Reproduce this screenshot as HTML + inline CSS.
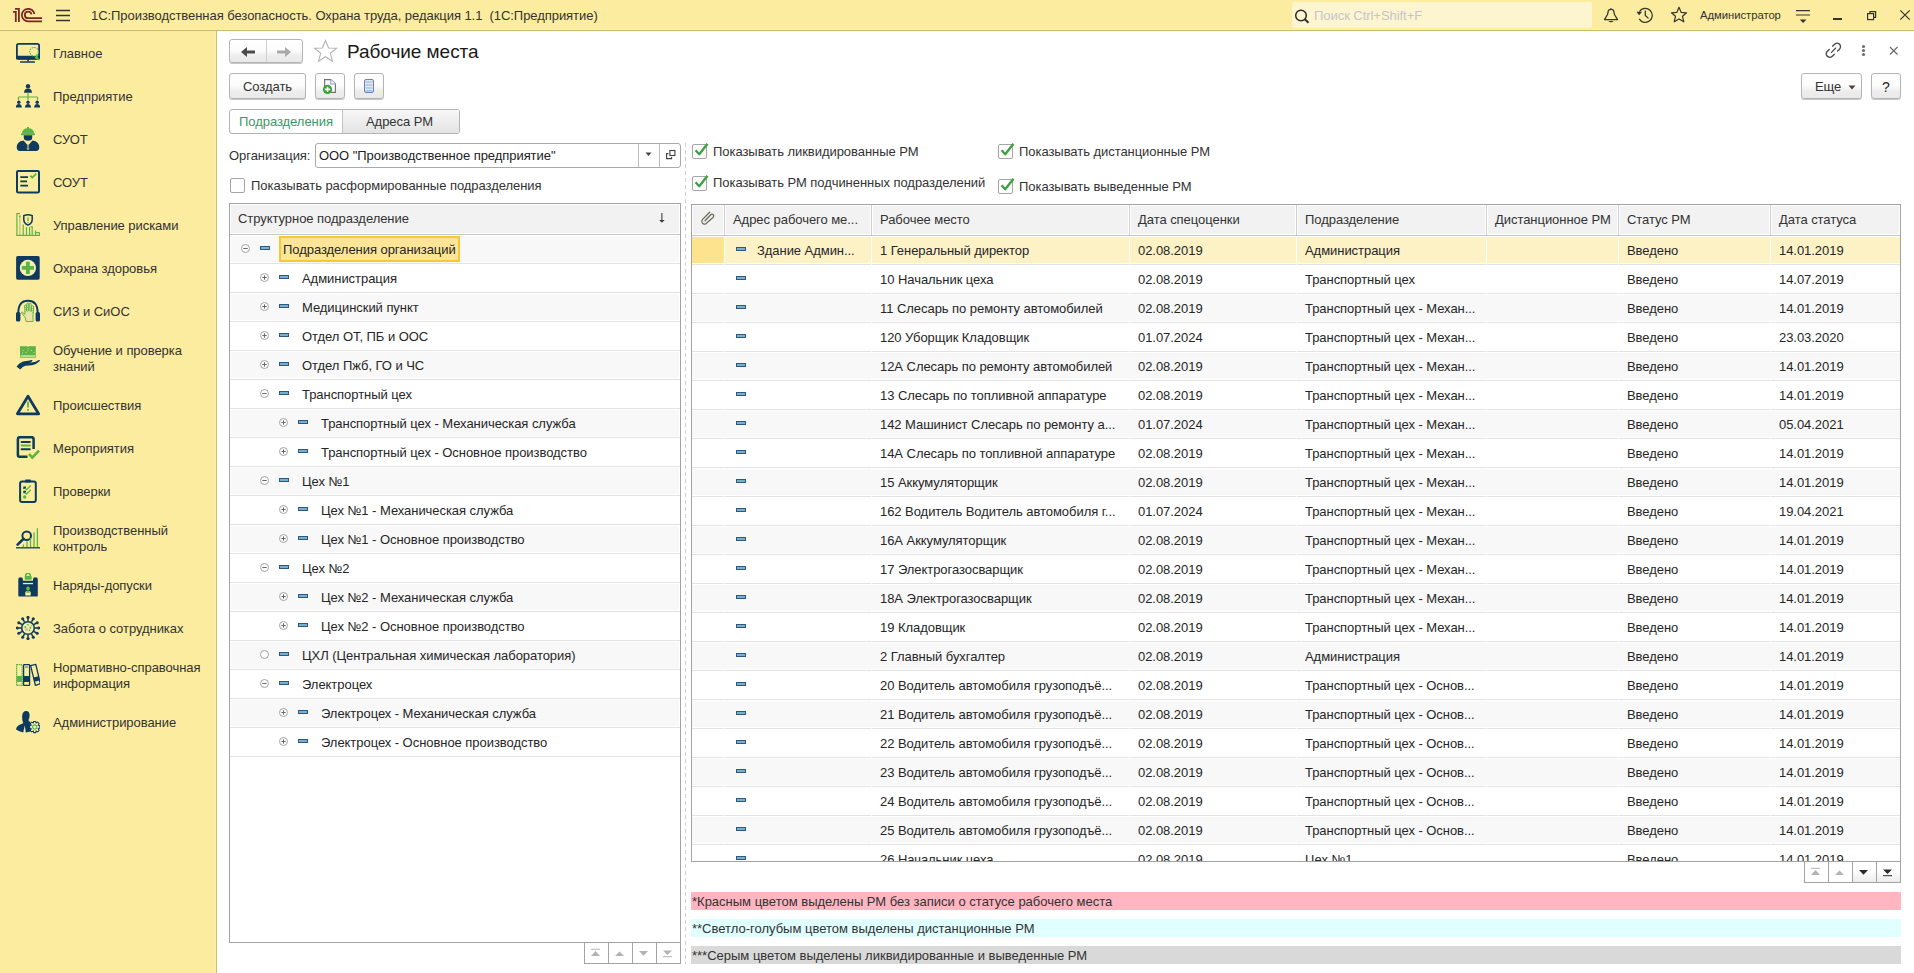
<!DOCTYPE html><html><head><meta charset="utf-8"><style>
html,body{margin:0;padding:0;}
body{width:1914px;height:973px;overflow:hidden;position:relative;background:#fff;font-family:"Liberation Sans",sans-serif;color:#333;}
.a{position:absolute;box-sizing:border-box;}
.t{position:absolute;white-space:pre;letter-spacing:-0.05px;}
.btn{position:absolute;box-sizing:border-box;border:1px solid #b4b4b4;border-radius:3px;background:linear-gradient(#ffffff 0%,#fcfcfc 48%,#ededed 72%,#e9e9e9 100%);box-shadow:0 1px 0 #c8c8c8;}
</style></head><body>
<div class="a" style="left:0px;top:0px;width:1914px;height:30px;background:#fbec9f;"></div>
<div class="a" style="left:0px;top:29px;width:1914px;height:1px;background:#fdf0a6;"></div>
<div class="a" style="left:0px;top:30px;width:1914px;height:1px;background:#cbbb6c;"></div>
<div class="a" style="left:0px;top:31px;width:216px;height:942px;background:#fbec9f;"></div>
<div class="a" style="left:215px;top:31px;width:1px;height:942px;background:#fcefa4;"></div>
<div class="a" style="left:216px;top:31px;width:1px;height:942px;background:#cdbf72;"></div>
<svg class="a" style="left:0px;top:0px;" width="50" height="30" viewBox="0 0 50 30"><g fill="none" stroke="#7d2424" stroke-width="1.75">
<path d="M13 11.8 H15.8 V22"/>
<path d="M15 8.9 H18.9 V22"/>
<path d="M34.4 14 A6.3 6.3 0 1 0 28.2 21.4 H42"/>
<path d="M31.4 14.4 A3.3 3.3 0 1 0 28.2 18.2 H42"/>
</g></svg>
<svg class="a" style="left:55px;top:9px;" width="16" height="13" viewBox="0 0 16 13"><g stroke="#333" stroke-width="1.3"><path d="M1 1.5H15M1 6.5H15M1 11.5H15"/></g></svg>
<div class="t " style="left:91px;top:6px;font-size:13px;line-height:20px;color:#333333;">1С:Производственная безопасность. Охрана труда, редакция 1.1  (1С:Предприятие)</div>
<div class="a" style="left:1292px;top:2px;width:300px;height:26px;background:#fdf5cf;border-radius:2px;"></div>
<svg class="a" style="left:1294px;top:9px;" width="17" height="15" viewBox="0 0 17 15"><g fill="none" stroke="#2b2b2b" stroke-width="1.5"><circle cx="7" cy="6.5" r="5.3"/><path d="M10.8 10.3 L14.5 13.8" stroke-width="2"/></g></svg>
<div class="t " style="left:1314px;top:6px;font-size:13px;line-height:20px;color:#c3c5cc;">Поиск Ctrl+Shift+F</div>
<svg class="a" style="left:1600px;top:0px;" width="22" height="30" viewBox="0 0 22 30"><g fill="none" stroke="#333" stroke-width="1.25"><path d="M11 8.3 V9.5"/><path d="M8.5 10.2 Q11 8.5 13.5 10.2 L14.5 14.5 L17.5 19.6 H4.5 L7.5 14.5 Z" stroke-linejoin="round"/></g><path d="M8.3 21 H13.7 Q11 23.6 8.3 21Z" fill="#333"/></svg>
<svg class="a" style="left:1634px;top:0px;" width="22" height="30" viewBox="0 0 22 30"><g fill="none" stroke="#333" stroke-width="1.25"><path d="M5.43 11.59 A7 7 0 1 1 5.24 18.9"/><path d="M11.3 10.5 V15.4 L14.5 18.4"/></g><path d="M2.4 11.8 L8 11.8 L5.2 15.2Z" fill="#333"/></svg>
<svg class="a" style="left:1670px;top:6px;" width="18" height="18" viewBox="0 0 18 18"><path fill="none" stroke="#333" stroke-width="1.2" stroke-linejoin="round" d="M9 1.3 L11.2 6.4 L16.6 6.8 L12.5 10.3 L13.8 15.8 L9 12.9 L4.2 15.8 L5.5 10.3 L1.4 6.8 L6.8 6.4 Z"/></svg>
<div class="t " style="left:1700px;top:5px;font-size:11.3px;line-height:20px;color:#333333;">Администратор</div>
<svg class="a" style="left:1794px;top:0px;" width="18" height="30" viewBox="0 0 18 30"><g stroke="#333" stroke-width="1.2"><path d="M2 10.6H16M2 15H16"/></g><path d="M5.8 19.6 L12.4 19.6 L9.1 22.9 Z" fill="#333"/></svg>
<div class="a" style="left:1833px;top:18px;width:9px;height:2px;background:#333;"></div>
<svg class="a" style="left:1865px;top:9px;" width="14" height="14" viewBox="0 0 14 14"><g fill="none" stroke="#333" stroke-width="1.2"><rect x="2.6" y="4.6" width="6" height="6"/><path d="M5 4.6 V2.6 H10.6 V8.4 H8.6"/></g></svg>
<svg class="a" style="left:1898px;top:8px;" width="14" height="14" viewBox="0 0 14 14"><g stroke="#333" stroke-width="1.2"><path d="M2.3 2.3 L11.7 11.7 M11.7 2.3 L2.3 11.7"/></g></svg>
<div class="t " style="left:53px;top:44px;font-size:13px;line-height:20px;color:#333333;">Главное</div>
<svg class="a" style="left:16px;top:41px;" width="24" height="24" viewBox="0 0 24 24"><rect x="0.9" y="2.9" width="22.2" height="15" rx="1.8" fill="none" stroke="#0f3a5f" stroke-width="1.8"/><rect x="0" y="14.8" width="24" height="3.6" rx="1" fill="#0f3a5f"/><rect x="11.3" y="18" width="1.6" height="2.5" fill="#0f3a5f"/><rect x="4" y="20.2" width="15" height="1.6" rx="0.6" fill="#0f3a5f"/><circle cx="18" cy="10.7" r="4.3" fill="#fbec9f" stroke="#5cb346" stroke-width="1.1" stroke-dasharray="1.6 0.9"/><path d="M21.2 13.5 L23.3 19.8 L18.5 17 Z" fill="#5cb346"/></svg>
<div class="t " style="left:53px;top:87px;font-size:13px;line-height:20px;color:#333333;">Предприятие</div>
<svg class="a" style="left:16px;top:84px;" width="24" height="24" viewBox="0 0 24 24"><circle cx="12" cy="2.3" r="2.2" fill="#0f3a5f"/><path d="M8 8.8 Q8.3 4.6 12 4.6 Q15.7 4.6 16 8.8 Z" fill="#0f3a5f"/><path d="M12 8.8 V13 M2.5 13 H21.5 M2.5 13 V16 M12 13 V16 M21.5 13 V16" stroke="#5cb346" stroke-width="1.2" fill="none"/><g fill="#0f3a5f"><circle cx="2.8" cy="18.3" r="1.7"/><circle cx="12" cy="18.3" r="1.7"/><circle cx="21.2" cy="18.3" r="1.7"/><path d="M-0.3 23.6 Q-0.1 20 2.8 20 Q5.7 20 5.9 23.6Z M8.9 23.6 Q9.1 20 12 20 Q14.9 20 15.1 23.6Z M18.1 23.6 Q18.3 20 21.2 20 Q24.1 20 24.3 23.6Z"/></g></svg>
<div class="t " style="left:53px;top:130px;font-size:13px;line-height:20px;color:#333333;">СУОТ</div>
<svg class="a" style="left:16px;top:127px;" width="24" height="24" viewBox="0 0 24 24"><path d="M6 6.8 Q6 1.3 12 1.3 Q18 1.3 18 6.8 Z" fill="#5cb346"/><rect x="11" y="0" width="2" height="2" fill="#5cb346"/><rect x="5" y="6.4" width="14" height="1.8" fill="#5cb346"/><path d="M7.8 8.2 H16.2 V10.5 Q16.2 13.8 12 13.8 Q7.8 13.8 7.8 10.5Z" fill="#0f3a5f"/><path d="M0.7 20 Q0.7 14.6 7.5 13.4 L12 18 L16.5 13.4 Q23.3 14.6 23.3 20 Q23.3 24 20 24 H4 Q0.7 24 0.7 20Z" fill="#0f3a5f"/><path d="M9 14 L12 18.5 L15 14" fill="none" stroke="#fbec9f" stroke-width="0.8"/><path d="M11.3 16.5 H12.7 L13.2 22 L12 23 L10.8 22Z" fill="#fbec9f"/><path d="M11.6 17.5 H12.4 L12.6 21.5 L12 22 L11.4 21.5Z" fill="#0f3a5f"/></svg>
<div class="t " style="left:53px;top:173px;font-size:13px;line-height:20px;color:#333333;">СОУТ</div>
<svg class="a" style="left:16px;top:170px;" width="24" height="24" viewBox="0 0 24 24"><rect x="1" y="1" width="22" height="21.5" rx="1.2" fill="none" stroke="#0f3a5f" stroke-width="2"/><path d="M4.3 7.2 H12 M4.3 11.4 H11 M4.3 15.6 H12" stroke="#0f3a5f" stroke-width="1.7"/><path d="M14.3 5.6 L16.3 7.6 L20.3 3.6" stroke="#5cb346" stroke-width="1.8" fill="none"/></svg>
<div class="t " style="left:53px;top:216px;font-size:13px;line-height:20px;color:#333333;">Управление рисками</div>
<svg class="a" style="left:16px;top:213px;" width="24" height="24" viewBox="0 0 24 24"><path d="M3.9 2.5 V22.3" stroke="#bdbf82" stroke-width="1.2"/><g fill="none" stroke="#5cb346" stroke-width="1.2"><path d="M0.9 22.5 V0.6 H4"/><path d="M7.2 22.5 V11.4 M10.5 22.5 V14 M13.6 22.5 V14 M16.2 22.5 V13.3 M19.5 22.5 V17.4 M23.3 22.5 V19.3 M19.5 19.6 H23.3 M14.8 13.6 H16.2"/><path d="M0.3 22.4 H24"/></g><circle cx="4" cy="3.4" r="0.8" fill="#5cb346"/><path d="M7.8 2.6 Q12 0.8 16.2 2.6 V6.5 Q16.2 10.4 12 12.1 Q7.8 10.4 7.8 6.5Z" fill="#fbec9f" stroke="#0f3a5f" stroke-width="1.5"/><path d="M12 4.5 V8.3 M12 9.3 V10.3" stroke="#5cb346" stroke-width="1.3"/></svg>
<div class="t " style="left:53px;top:259px;font-size:13px;line-height:20px;color:#333333;">Охрана здоровья</div>
<svg class="a" style="left:16px;top:256px;" width="24" height="24" viewBox="0 0 24 24"><rect x="0.1" y="0.1" width="23.6" height="23.6" rx="1.6" fill="#0f3a5f"/><circle cx="11.9" cy="11.9" r="8.1" fill="#f6efb2"/><path d="M10 5.8 H13.8 V10 H18 V13.8 H13.8 V18 H10 V13.8 H5.8 V10 H10Z" fill="#5cb346"/></svg>
<div class="t " style="left:53px;top:302px;font-size:13px;line-height:20px;color:#333333;">СИЗ и СиОС</div>
<svg class="a" style="left:16px;top:299px;" width="24" height="24" viewBox="0 0 24 24"><path d="M2.3 14 Q2.3 1.8 12 1.8 Q21.7 1.8 21.7 14" fill="none" stroke="#0f3a5f" stroke-width="1.9"/><rect x="0" y="13" width="4.4" height="9.6" rx="1.6" fill="#0f3a5f"/><rect x="19.6" y="13" width="4.4" height="9.6" rx="1.6" fill="#0f3a5f"/><path d="M10 22.5 L9.5 19 L5.6 14 Q5 13 6.2 13 L9 15.5 L8.6 7 Q8.6 5.8 9.6 5.8 Q10.6 5.8 10.6 7 V12 L10.8 5 Q10.8 4 11.8 4 Q12.8 4 12.8 5 V12 L13.2 5.2 Q13.2 4.4 14.2 4.4 Q15.2 4.4 15.2 5.5 V12.5 L15.8 7.5 Q16 6.6 16.9 6.8 Q17.8 7 17.7 8 L17 17 L17 22.5 Z" fill="#ece3a6" stroke="#5cb346" stroke-width="0.95"/><path d="M11.7 6 V13 M14.2 6.5 V13 M9.7 8 V14 M16.6 9 V15" stroke="#5cb346" stroke-width="0.6" stroke-dasharray="1 1"/></svg>
<div class="t " style="left:53px;top:341px;font-size:13px;line-height:20px;color:#333333;">Обучение и проверка</div>
<div class="t " style="left:53px;top:357px;font-size:13px;line-height:20px;color:#333333;">знаний</div>
<svg class="a" style="left:16px;top:346px;" width="24" height="24" viewBox="0 0 24 24"><rect x="4" y="0.2" width="15.8" height="11.6" fill="#5cb346"/><path d="M12 0.2 V5.5" stroke="#fbec9f" stroke-width="0.7" stroke-dasharray="1 1"/><path d="M4.6 9.2 H19.2 V11.2 H4.6Z" fill="#dfe6a8"/><path d="M5.5 10.2 H18.5" stroke="#5cb346" stroke-width="0.7" stroke-dasharray="1 1"/><g fill="#f3e69a"><circle cx="7" cy="4.5" r="0.5"/><circle cx="15.5" cy="4.5" r="0.5"/><circle cx="10" cy="6.5" r="0.5"/><circle cx="18" cy="6.5" r="0.5"/><circle cx="6.5" cy="7" r="0.5"/></g><path d="M0.5 20.5 Q3 17 7 15.6 L13.5 14.6 Q15.2 13.6 16.3 14 Q16.9 15 15 16.2 L12.5 17 L19.5 15.8 L22.8 14.1 Q24.3 13.8 23.8 15 Q21 18.2 16 19.2 L9.5 19.7 Q6.5 20.6 4.2 23.4 Z" fill="#0f3a5f"/></svg>
<div class="t " style="left:53px;top:396px;font-size:13px;line-height:20px;color:#333333;">Происшествия</div>
<svg class="a" style="left:16px;top:393px;" width="24" height="24" viewBox="0 0 24 24"><path d="M12 3.3 L22.6 20.8 H1.4 Z" fill="none" stroke="#0f3a5f" stroke-width="2.8" stroke-linejoin="round"/><path d="M12 8.5 V14.5" stroke="#5cb346" stroke-width="1.8"/><rect x="11.1" y="16" width="1.8" height="1.8" fill="#5cb346"/></svg>
<div class="t " style="left:53px;top:439px;font-size:13px;line-height:20px;color:#333333;">Мероприятия</div>
<svg class="a" style="left:16px;top:436px;" width="24" height="24" viewBox="0 0 24 24"><path d="M17.6 13 V2.9 Q17.6 1.2 15.9 1.2 H3.6 Q1.9 1.2 1.9 2.9 V19.1 Q1.9 20.8 3.6 20.8 H11.5" fill="none" stroke="#0f3a5f" stroke-width="2.5"/><path d="M5.6 9.6 H13.8" stroke="#5cb346" stroke-width="2" stroke-linecap="round"/><path d="M5.6 6 H13.8 M5.6 13.2 H13.8" stroke="#0f3a5f" stroke-width="2" stroke-linecap="round"/><path d="M13 18 L16.3 21.6 L23 14.6" fill="none" stroke="#5cb346" stroke-width="2.6"/></svg>
<div class="t " style="left:53px;top:482px;font-size:13px;line-height:20px;color:#333333;">Проверки</div>
<svg class="a" style="left:16px;top:479px;" width="24" height="24" viewBox="0 0 24 24"><rect x="4.1" y="2.5" width="15.7" height="20.5" rx="2" fill="none" stroke="#0f3a5f" stroke-width="2"/><rect x="9" y="0.5" width="6" height="3" rx="0.8" fill="#0f3a5f"/><path d="M7.3 7.5 H10 V10 H7.3Z M7.3 11.8 H10 V14.3 H7.3Z" fill="#0f3a5f"/><path d="M8.8 9 L10.5 10.7 L14.8 6.5 M8.8 13.3 L10.5 15 L14.8 10.8" stroke="#5cb346" stroke-width="1.3" fill="none"/><circle cx="8.7" cy="18" r="1.7" fill="#5cb346"/></svg>
<div class="t " style="left:53px;top:521px;font-size:13px;line-height:20px;color:#333333;">Производственный</div>
<div class="t " style="left:53px;top:537px;font-size:13px;line-height:20px;color:#333333;">контроль</div>
<svg class="a" style="left:16px;top:526px;" width="24" height="24" viewBox="0 0 24 24"><circle cx="10.7" cy="9.7" r="4.3" fill="none" stroke="#0f3a5f" stroke-width="2"/><path d="M7.6 12.8 L1.6 18.6" stroke="#0f3a5f" stroke-width="2.6" stroke-linecap="round"/><path d="M7.4 21 V18.5 M11 21 V15.5 M14.5 21 V12 M18 21 V6.5 M21.4 21 V2.3" stroke="#5cb346" stroke-width="1.3"/><path d="M0 21.8 H24" stroke="#0f3a5f" stroke-width="1.3"/></svg>
<div class="t " style="left:53px;top:576px;font-size:13px;line-height:20px;color:#333333;">Наряды-допуски</div>
<svg class="a" style="left:16px;top:573px;" width="24" height="24" viewBox="0 0 24 24"><path d="M2.3 6 Q2.3 4.2 4.4 4.2 Q6.9 4.2 6.9 6 V7.7 H17 V6 Q17 4.2 19.4 4.2 Q21.8 4.2 21.8 6 V22.4 Q21.8 23.6 20.6 23.6 H3.5 Q2.3 23.6 2.3 22.4Z" fill="#0f3a5f"/><path d="M9.6 3.5 Q9.6 0.3 12 0.3 Q14.4 0.3 14.4 3.5" fill="none" stroke="#5cb346" stroke-width="1.6"/><rect x="8.8" y="3" width="6.8" height="3.8" rx="0.6" fill="#5cb346"/><rect x="6.9" y="9.9" width="10.1" height="1.3" fill="#f6efb2"/><path d="M9.3 22.4 V19.5 Q9.3 17.8 12 17.8 Q14.7 17.8 14.7 19.5 V22.4Z" fill="#f6efb2"/><circle cx="12" cy="15.6" r="2" fill="#5cb346"/><path d="M10.2 19.8 Q10.2 17.6 12 17.6 Q13.8 17.6 13.8 19.8Z" fill="#5cb346"/></svg>
<div class="t " style="left:53px;top:619px;font-size:13px;line-height:20px;color:#333333;">Забота о сотрудниках</div>
<svg class="a" style="left:16px;top:616px;" width="24" height="24" viewBox="0 0 24 24"><circle cx="12" cy="12" r="6.3" fill="#f6efb2" stroke="#0f3a5f" stroke-width="1.6"/><path d="M19.00 12.00 L21.60 12.00 M18.06 15.50 L20.31 16.80 M15.50 18.06 L16.80 20.31 M12.00 19.00 L12.00 21.60 M8.50 18.06 L7.20 20.31 M5.94 15.50 L3.69 16.80 M5.00 12.00 L2.40 12.00 M5.94 8.50 L3.69 7.20 M8.50 5.94 L7.20 3.69 M12.00 5.00 L12.00 2.40 M15.50 5.94 L16.80 3.69 M18.06 8.50 L20.31 7.20" stroke="#0f3a5f" stroke-width="1.5"/><g fill="#0f3a5f"><circle cx="22.60" cy="12.00" r="1.55"/><circle cx="21.18" cy="17.30" r="1.55"/><circle cx="17.30" cy="21.18" r="1.55"/><circle cx="12.00" cy="22.60" r="1.55"/><circle cx="6.70" cy="21.18" r="1.55"/><circle cx="2.82" cy="17.30" r="1.55"/><circle cx="1.40" cy="12.00" r="1.55"/><circle cx="2.82" cy="6.70" r="1.55"/><circle cx="6.70" cy="2.82" r="1.55"/><circle cx="12.00" cy="1.40" r="1.55"/><circle cx="17.30" cy="2.82" r="1.55"/><circle cx="21.18" cy="6.70" r="1.55"/></g><g fill="#5cb346"><circle cx="12" cy="8.8" r="0.9"/><circle cx="9.3" cy="11" r="0.9"/><circle cx="14.3" cy="11.8" r="1"/><circle cx="13.5" cy="14.3" r="0.9"/><circle cx="15.2" cy="9.6" r="0.6"/></g><circle cx="10.5" cy="13.5" r="1.7" fill="#c9cf8e"/></svg>
<div class="t " style="left:53px;top:658px;font-size:13px;line-height:20px;color:#333333;">Нормативно-справочная</div>
<div class="t " style="left:53px;top:674px;font-size:13px;line-height:20px;color:#333333;">информация</div>
<svg class="a" style="left:16px;top:663px;" width="24" height="24" viewBox="0 0 24 24"><rect x="0.6" y="1.6" width="5.6" height="20.8" fill="#fbec9f" stroke="#5cb346" stroke-width="1.2" stroke-dasharray="1.4 0.6"/><rect x="0.6" y="13" width="5.6" height="6" fill="#5cb346"/><rect x="7.6" y="1.6" width="6" height="20.8" rx="0.6" fill="#fbec9f" stroke="#0f3a5f" stroke-width="1.3"/><rect x="7.6" y="13" width="6" height="6" fill="#0f3a5f"/><path d="M9.2 4 H12" stroke="#0f3a5f" stroke-width="0.8"/><path d="M14.6 2.6 L19.8 1.4 L24.4 20.8 L19.4 22.3Z" fill="#fbec9f" stroke="#0f3a5f" stroke-width="1.3" stroke-linejoin="round"/><path d="M17.2 14.5 L22.5 13.2 L23.5 17.4 L18.3 18.8Z" fill="#0f3a5f"/></svg>
<div class="t " style="left:53px;top:713px;font-size:13px;line-height:20px;color:#333333;">Администрирование</div>
<svg class="a" style="left:16px;top:710px;" width="24" height="24" viewBox="0 0 24 24"><path d="M10.2 1 Q13.8 1.2 13.6 5.8 Q13.5 8.8 12.4 10.2 L14.4 12.5 L14.8 21.6 L9.8 22.4 L8.8 15.5 L7.2 22.4 Q3 21.6 0 19.5 Q0.4 15.8 5.3 14 L7.2 13.2 Q6 10.8 6.1 6.5 Q6.3 1 10.2 1Z" fill="#0f3a5f"/><g transform="translate(18.7 17)"><path d="M-1 -5.6 H1 L1.4 -4 L3 -4.9 L4.4 -3.5 L3.5 -1.9 L5.1 -1.3 V1.1 L3.5 1.7 L4.4 3.5 L3 4.9 L1.4 4 L1 5.6 H-1 L-1.4 4 L-3 4.9 L-4.4 3.5 L-3.5 1.7 L-5.1 1.1 V-1.3 L-3.5 -1.9 L-4.4 -3.5 L-3 -4.9 L-1.4 -4Z" fill="#f8eeb0" stroke="#0f3a5f" stroke-width="1.05"/><circle r="2.1" fill="none" stroke="#5cb346" stroke-width="1.2"/></g></svg>
<div class="btn" style="left:229px;top:39px;width:74px;height:24px;"></div>
<div class="a" style="left:266px;top:40px;width:1px;height:22px;background:#d0d0d0;"></div>
<svg class="a" style="left:240px;top:46px;" width="16" height="12" viewBox="0 0 16 12"><path d="M1 6 L7 1 V4.5 H15 V7.5 H7 V11Z" fill="#4b4b4b"/></svg>
<svg class="a" style="left:276px;top:46px;" width="16" height="12" viewBox="0 0 16 12"><path d="M15 6 L9 1 V4.5 H1 V7.5 H9 V11Z" fill="#a9a9a9"/></svg>
<svg class="a" style="left:313px;top:39px;" width="25" height="24" viewBox="0 0 25 24"><path fill="none" stroke="#b4b4b4" stroke-width="1.1" d="M12.5 1.5 L15.6 9 L23.5 9.3 L17.3 14.3 L19.5 22.2 L12.5 17.7 L5.5 22.2 L7.7 14.3 L1.5 9.3 L9.4 9 Z"/></svg>
<div class="t " style="left:347px;top:40px;font-size:19px;line-height:24px;color:#1a1a1a;">Рабочие места</div>
<svg class="a" style="left:1822px;top:40px;" width="24" height="22" viewBox="0 0 24 22"><g fill="none" stroke="#484848" stroke-width="1.35" stroke-linecap="round"><path d="M10.6 6.1 L13 3.9 Q14.8 2.6 16.8 3.6 Q18.8 5 18.5 7 Q18.3 8.4 17.3 9.4 L15.6 11.1"/><path d="M7.2 9.5 L5 11.7 Q3.8 13 4.3 14.8 Q5 16.8 7.5 17.3 Q9 17.4 10.3 16.2 L12.4 14.3"/><path d="M9.5 12.4 L13.6 8.1"/></g></svg>
<svg class="a" style="left:1860px;top:44px;" width="8" height="14" viewBox="0 0 8 14"><g fill="#6d6d6d"><circle cx="3.5" cy="2.5" r="1.6"/><circle cx="3.5" cy="6.5" r="1.6"/><circle cx="3.5" cy="10.5" r="1.6"/></g></svg>
<svg class="a" style="left:1888px;top:45px;" width="12" height="12" viewBox="0 0 12 12"><path d="M2 2 L9.5 9.5 M9.5 2 L2 9.5" stroke="#6a6a6a" stroke-width="1.2"/></svg>
<div class="btn" style="left:229px;top:73px;width:77px;height:26px;"></div>
<div class="t " style="left:243px;top:77px;font-size:13px;line-height:20px;color:#333333;">Создать</div>
<div class="btn" style="left:315px;top:73px;width:30px;height:26px;"></div>
<svg class="a" style="left:312px;top:70px;" width="30" height="30" viewBox="0 0 30 30"><path d="M12.6 9.6 H18.8 L23.4 14 V22.4 H12.6Z" fill="#fff" stroke="#6f6f6f" stroke-width="1.1"/><path d="M18.8 9.6 V14 H23.4" fill="#fff" stroke="#8a98d0" stroke-width="1.1"/><circle cx="15.5" cy="19.4" r="4.6" fill="#36a336"/><path d="M15.5 16.7 V22.1 M12.8 19.4 H18.2" stroke="#fff" stroke-width="1.6"/></svg>
<div class="btn" style="left:354px;top:73px;width:30px;height:26px;"></div>
<svg class="a" style="left:363px;top:78px;" width="12" height="16" viewBox="0 0 12 16"><rect x="1.5" y="1.5" width="9" height="13" rx="1.5" fill="#e4e8ee" stroke="#6e7fb8" stroke-width="1"/><path d="M2.5 4 H9.5 M2.5 7 H9.5 M2.5 10 H9.5" stroke="#8db3dc" stroke-width="1.2"/><path d="M2.5 12.8 H9.5" stroke="#7fc6e8" stroke-width="1.4"/></svg>
<div class="btn" style="left:1801px;top:73px;width:61px;height:26px;"></div>
<div class="t " style="left:1815px;top:77px;font-size:13px;line-height:20px;color:#333333;">Еще</div>
<svg class="a" style="left:1848px;top:85px;" width="8" height="5" viewBox="0 0 8 5"><path d="M0.5 0.5 H7.5 L4 4.5Z" fill="#444"/></svg>
<div class="btn" style="left:1871px;top:73px;width:30px;height:26px;"></div>
<div class="t " style="left:1882px;top:77px;font-size:14px;line-height:20px;color:#222;">?</div>
<div class="a" style="left:229px;top:109px;width:231px;height:25px;border:1px solid #b4b4b4;border-radius:3px;background:#fff;"></div>
<div class="a" style="left:342px;top:110px;width:117px;height:23px;background:linear-gradient(#f7f7f7,#e4e4e4);border-left:1px solid #c2c2c2;border-radius:0 2px 2px 0;"></div>
<div class="t " style="left:239px;top:112px;font-size:13px;line-height:20px;color:#3a9a68;">Подразделения</div>
<div class="t " style="left:366px;top:112px;font-size:13px;line-height:20px;color:#333333;">Адреса РМ</div>
<div class="t " style="left:229px;top:146px;font-size:13px;line-height:20px;color:#333333;">Организация:</div>
<div class="a" style="left:315px;top:143px;width:366px;height:25px;border:1px solid #a9a9a9;border-radius:3px;background:#fff;"></div>
<div class="a" style="left:638px;top:144px;width:1px;height:23px;background:#bdbdbd;"></div>
<div class="a" style="left:659px;top:144px;width:1px;height:23px;background:#bdbdbd;"></div>
<div class="t " style="left:319px;top:146px;font-size:13px;line-height:20px;color:#222;">ООО &quot;Производственное предприятие&quot;</div>
<svg class="a" style="left:645px;top:152px;" width="8" height="5" viewBox="0 0 8 5"><path d="M0.5 0.5 H6.5 L3.5 4Z" fill="#444"/></svg>
<svg class="a" style="left:664px;top:148px;" width="13" height="13" viewBox="0 0 13 13"><g fill="none" stroke="#3e3e3e" stroke-width="1.1"><rect x="5.9" y="2.5" width="5" height="5"/><path d="M4.4 5.6 H2.6 V10.6 H7.6 V9"/></g></svg>
<div class="a" style="left:230px;top:178px;width:15px;height:15px;border:1px solid #a5a5a5;border-radius:2px;background:#fff;"></div>
<div class="t " style="left:251px;top:176px;font-size:13px;line-height:20px;color:#333333;">Показывать расформированные подразделения</div>
<svg class="a" style="left:685px;top:143px;" width="1" height="821" viewBox="0 0 1 821"><path d="M0.5 0 V821" stroke="#cfcfcf" stroke-width="1" stroke-dasharray="4 3"/></svg>
<div class="a" style="left:229px;top:203px;width:452px;height:740px;border:1px solid #a3a3a3;background:#fff;"></div>
<div class="a" style="left:231px;top:205px;width:448px;height:28px;background:#f2f2f2;"></div>
<div class="a" style="left:230px;top:234px;width:450px;height:1px;background:#c6c6c6;"></div>
<div class="t " style="left:238px;top:209px;font-size:13px;line-height:20px;color:#333333;">Структурное подразделение</div>
<svg class="a" style="left:656px;top:212px;" width="12" height="12" viewBox="0 0 12 12"><path d="M5.9 1 V9" stroke="#3e3e3e" stroke-width="1.1"/><path d="M3.1 8 L5.9 10.8 L8.7 8 Z" fill="#3e3e3e"/></svg>
<div class="a" style="left:231px;top:236px;width:448px;height:26px;background:#f8f8f8;"></div>
<div class="a" style="left:230px;top:263px;width:450px;height:1px;background:#e3e3e3;"></div>
<svg class="a" style="left:241px;top:244px;" width="9" height="9" viewBox="0 0 9 9"><circle cx="4.5" cy="4.5" r="4" fill="#fff" stroke="#a3a3a3" stroke-width="1"/><path d="M2.3 4.5 H6.7" stroke="#6a6a60" stroke-width="1"/></svg>
<div class="a" style="left:260px;top:246px;width:10px;height:4px;background:#78b0cc;border:1px solid #2d5882;"></div>
<div class="a" style="left:279px;top:236px;width:181px;height:26px;background:#fde597;border:2px solid #f8c736;"></div>
<div class="t " style="left:283px;top:240px;font-size:13px;line-height:20px;color:#262626;">Подразделения организаций</div>
<div class="a" style="left:230px;top:292px;width:450px;height:1px;background:#e3e3e3;"></div>
<svg class="a" style="left:260px;top:273px;" width="9" height="9" viewBox="0 0 9 9"><circle cx="4.5" cy="4.5" r="4" fill="#fff" stroke="#a3a3a3" stroke-width="1"/><path d="M2.3 4.5 H6.7" stroke="#6a6a60" stroke-width="1"/><path d="M4.5 2.3 V6.7" stroke="#6a6a60" stroke-width="1"/></svg>
<div class="a" style="left:279px;top:275px;width:10px;height:4px;background:#78b0cc;border:1px solid #2d5882;"></div>
<div class="t " style="left:302px;top:269px;font-size:13px;line-height:20px;color:#262626;">Администрация</div>
<div class="a" style="left:231px;top:294px;width:448px;height:26px;background:#f8f8f8;"></div>
<div class="a" style="left:230px;top:321px;width:450px;height:1px;background:#e3e3e3;"></div>
<svg class="a" style="left:260px;top:302px;" width="9" height="9" viewBox="0 0 9 9"><circle cx="4.5" cy="4.5" r="4" fill="#fff" stroke="#a3a3a3" stroke-width="1"/><path d="M2.3 4.5 H6.7" stroke="#6a6a60" stroke-width="1"/><path d="M4.5 2.3 V6.7" stroke="#6a6a60" stroke-width="1"/></svg>
<div class="a" style="left:279px;top:304px;width:10px;height:4px;background:#78b0cc;border:1px solid #2d5882;"></div>
<div class="t " style="left:302px;top:298px;font-size:13px;line-height:20px;color:#262626;">Медицинский пункт</div>
<div class="a" style="left:230px;top:350px;width:450px;height:1px;background:#e3e3e3;"></div>
<svg class="a" style="left:260px;top:331px;" width="9" height="9" viewBox="0 0 9 9"><circle cx="4.5" cy="4.5" r="4" fill="#fff" stroke="#a3a3a3" stroke-width="1"/><path d="M2.3 4.5 H6.7" stroke="#6a6a60" stroke-width="1"/><path d="M4.5 2.3 V6.7" stroke="#6a6a60" stroke-width="1"/></svg>
<div class="a" style="left:279px;top:333px;width:10px;height:4px;background:#78b0cc;border:1px solid #2d5882;"></div>
<div class="t " style="left:302px;top:327px;font-size:13px;line-height:20px;color:#262626;">Отдел ОТ, ПБ и ООС</div>
<div class="a" style="left:231px;top:352px;width:448px;height:26px;background:#f8f8f8;"></div>
<div class="a" style="left:230px;top:379px;width:450px;height:1px;background:#e3e3e3;"></div>
<svg class="a" style="left:260px;top:360px;" width="9" height="9" viewBox="0 0 9 9"><circle cx="4.5" cy="4.5" r="4" fill="#fff" stroke="#a3a3a3" stroke-width="1"/><path d="M2.3 4.5 H6.7" stroke="#6a6a60" stroke-width="1"/><path d="M4.5 2.3 V6.7" stroke="#6a6a60" stroke-width="1"/></svg>
<div class="a" style="left:279px;top:362px;width:10px;height:4px;background:#78b0cc;border:1px solid #2d5882;"></div>
<div class="t " style="left:302px;top:356px;font-size:13px;line-height:20px;color:#262626;">Отдел Пжб, ГО и ЧС</div>
<div class="a" style="left:230px;top:408px;width:450px;height:1px;background:#e3e3e3;"></div>
<svg class="a" style="left:260px;top:389px;" width="9" height="9" viewBox="0 0 9 9"><circle cx="4.5" cy="4.5" r="4" fill="#fff" stroke="#a3a3a3" stroke-width="1"/><path d="M2.3 4.5 H6.7" stroke="#6a6a60" stroke-width="1"/></svg>
<div class="a" style="left:279px;top:391px;width:10px;height:4px;background:#78b0cc;border:1px solid #2d5882;"></div>
<div class="t " style="left:302px;top:385px;font-size:13px;line-height:20px;color:#262626;">Транспортный цех</div>
<div class="a" style="left:231px;top:410px;width:448px;height:26px;background:#f8f8f8;"></div>
<div class="a" style="left:230px;top:437px;width:450px;height:1px;background:#e3e3e3;"></div>
<svg class="a" style="left:279px;top:418px;" width="9" height="9" viewBox="0 0 9 9"><circle cx="4.5" cy="4.5" r="4" fill="#fff" stroke="#a3a3a3" stroke-width="1"/><path d="M2.3 4.5 H6.7" stroke="#6a6a60" stroke-width="1"/><path d="M4.5 2.3 V6.7" stroke="#6a6a60" stroke-width="1"/></svg>
<div class="a" style="left:298px;top:420px;width:10px;height:4px;background:#78b0cc;border:1px solid #2d5882;"></div>
<div class="t " style="left:321px;top:414px;font-size:13px;line-height:20px;color:#262626;">Транспортный цех - Механическая служба</div>
<div class="a" style="left:230px;top:466px;width:450px;height:1px;background:#e3e3e3;"></div>
<svg class="a" style="left:279px;top:447px;" width="9" height="9" viewBox="0 0 9 9"><circle cx="4.5" cy="4.5" r="4" fill="#fff" stroke="#a3a3a3" stroke-width="1"/><path d="M2.3 4.5 H6.7" stroke="#6a6a60" stroke-width="1"/><path d="M4.5 2.3 V6.7" stroke="#6a6a60" stroke-width="1"/></svg>
<div class="a" style="left:298px;top:449px;width:10px;height:4px;background:#78b0cc;border:1px solid #2d5882;"></div>
<div class="t " style="left:321px;top:443px;font-size:13px;line-height:20px;color:#262626;">Транспортный цех - Основное производство</div>
<div class="a" style="left:231px;top:468px;width:448px;height:26px;background:#f8f8f8;"></div>
<div class="a" style="left:230px;top:495px;width:450px;height:1px;background:#e3e3e3;"></div>
<svg class="a" style="left:260px;top:476px;" width="9" height="9" viewBox="0 0 9 9"><circle cx="4.5" cy="4.5" r="4" fill="#fff" stroke="#a3a3a3" stroke-width="1"/><path d="M2.3 4.5 H6.7" stroke="#6a6a60" stroke-width="1"/></svg>
<div class="a" style="left:279px;top:478px;width:10px;height:4px;background:#78b0cc;border:1px solid #2d5882;"></div>
<div class="t " style="left:302px;top:472px;font-size:13px;line-height:20px;color:#262626;">Цех №1</div>
<div class="a" style="left:230px;top:524px;width:450px;height:1px;background:#e3e3e3;"></div>
<svg class="a" style="left:279px;top:505px;" width="9" height="9" viewBox="0 0 9 9"><circle cx="4.5" cy="4.5" r="4" fill="#fff" stroke="#a3a3a3" stroke-width="1"/><path d="M2.3 4.5 H6.7" stroke="#6a6a60" stroke-width="1"/><path d="M4.5 2.3 V6.7" stroke="#6a6a60" stroke-width="1"/></svg>
<div class="a" style="left:298px;top:507px;width:10px;height:4px;background:#78b0cc;border:1px solid #2d5882;"></div>
<div class="t " style="left:321px;top:501px;font-size:13px;line-height:20px;color:#262626;">Цех №1 - Механическая служба</div>
<div class="a" style="left:231px;top:526px;width:448px;height:26px;background:#f8f8f8;"></div>
<div class="a" style="left:230px;top:553px;width:450px;height:1px;background:#e3e3e3;"></div>
<svg class="a" style="left:279px;top:534px;" width="9" height="9" viewBox="0 0 9 9"><circle cx="4.5" cy="4.5" r="4" fill="#fff" stroke="#a3a3a3" stroke-width="1"/><path d="M2.3 4.5 H6.7" stroke="#6a6a60" stroke-width="1"/><path d="M4.5 2.3 V6.7" stroke="#6a6a60" stroke-width="1"/></svg>
<div class="a" style="left:298px;top:536px;width:10px;height:4px;background:#78b0cc;border:1px solid #2d5882;"></div>
<div class="t " style="left:321px;top:530px;font-size:13px;line-height:20px;color:#262626;">Цех №1 - Основное производство</div>
<div class="a" style="left:230px;top:582px;width:450px;height:1px;background:#e3e3e3;"></div>
<svg class="a" style="left:260px;top:563px;" width="9" height="9" viewBox="0 0 9 9"><circle cx="4.5" cy="4.5" r="4" fill="#fff" stroke="#a3a3a3" stroke-width="1"/><path d="M2.3 4.5 H6.7" stroke="#6a6a60" stroke-width="1"/></svg>
<div class="a" style="left:279px;top:565px;width:10px;height:4px;background:#78b0cc;border:1px solid #2d5882;"></div>
<div class="t " style="left:302px;top:559px;font-size:13px;line-height:20px;color:#262626;">Цех №2</div>
<div class="a" style="left:231px;top:584px;width:448px;height:26px;background:#f8f8f8;"></div>
<div class="a" style="left:230px;top:611px;width:450px;height:1px;background:#e3e3e3;"></div>
<svg class="a" style="left:279px;top:592px;" width="9" height="9" viewBox="0 0 9 9"><circle cx="4.5" cy="4.5" r="4" fill="#fff" stroke="#a3a3a3" stroke-width="1"/><path d="M2.3 4.5 H6.7" stroke="#6a6a60" stroke-width="1"/><path d="M4.5 2.3 V6.7" stroke="#6a6a60" stroke-width="1"/></svg>
<div class="a" style="left:298px;top:594px;width:10px;height:4px;background:#78b0cc;border:1px solid #2d5882;"></div>
<div class="t " style="left:321px;top:588px;font-size:13px;line-height:20px;color:#262626;">Цех №2 - Механическая служба</div>
<div class="a" style="left:230px;top:640px;width:450px;height:1px;background:#e3e3e3;"></div>
<svg class="a" style="left:279px;top:621px;" width="9" height="9" viewBox="0 0 9 9"><circle cx="4.5" cy="4.5" r="4" fill="#fff" stroke="#a3a3a3" stroke-width="1"/><path d="M2.3 4.5 H6.7" stroke="#6a6a60" stroke-width="1"/><path d="M4.5 2.3 V6.7" stroke="#6a6a60" stroke-width="1"/></svg>
<div class="a" style="left:298px;top:623px;width:10px;height:4px;background:#78b0cc;border:1px solid #2d5882;"></div>
<div class="t " style="left:321px;top:617px;font-size:13px;line-height:20px;color:#262626;">Цех №2 - Основное производство</div>
<div class="a" style="left:231px;top:642px;width:448px;height:26px;background:#f8f8f8;"></div>
<div class="a" style="left:230px;top:669px;width:450px;height:1px;background:#e3e3e3;"></div>
<svg class="a" style="left:260px;top:650px;" width="9" height="9" viewBox="0 0 9 9"><circle cx="4.5" cy="4.5" r="4" fill="#fff" stroke="#a3a3a3" stroke-width="1"/></svg>
<div class="a" style="left:279px;top:652px;width:10px;height:4px;background:#78b0cc;border:1px solid #2d5882;"></div>
<div class="t " style="left:302px;top:646px;font-size:13px;line-height:20px;color:#262626;">ЦХЛ (Центральная химическая лаборатория)</div>
<div class="a" style="left:230px;top:698px;width:450px;height:1px;background:#e3e3e3;"></div>
<svg class="a" style="left:260px;top:679px;" width="9" height="9" viewBox="0 0 9 9"><circle cx="4.5" cy="4.5" r="4" fill="#fff" stroke="#a3a3a3" stroke-width="1"/><path d="M2.3 4.5 H6.7" stroke="#6a6a60" stroke-width="1"/></svg>
<div class="a" style="left:279px;top:681px;width:10px;height:4px;background:#78b0cc;border:1px solid #2d5882;"></div>
<div class="t " style="left:302px;top:675px;font-size:13px;line-height:20px;color:#262626;">Электроцех</div>
<div class="a" style="left:231px;top:700px;width:448px;height:26px;background:#f8f8f8;"></div>
<div class="a" style="left:230px;top:727px;width:450px;height:1px;background:#e3e3e3;"></div>
<svg class="a" style="left:279px;top:708px;" width="9" height="9" viewBox="0 0 9 9"><circle cx="4.5" cy="4.5" r="4" fill="#fff" stroke="#a3a3a3" stroke-width="1"/><path d="M2.3 4.5 H6.7" stroke="#6a6a60" stroke-width="1"/><path d="M4.5 2.3 V6.7" stroke="#6a6a60" stroke-width="1"/></svg>
<div class="a" style="left:298px;top:710px;width:10px;height:4px;background:#78b0cc;border:1px solid #2d5882;"></div>
<div class="t " style="left:321px;top:704px;font-size:13px;line-height:20px;color:#262626;">Электроцех - Механическая служба</div>
<div class="a" style="left:230px;top:756px;width:450px;height:1px;background:#e3e3e3;"></div>
<svg class="a" style="left:279px;top:737px;" width="9" height="9" viewBox="0 0 9 9"><circle cx="4.5" cy="4.5" r="4" fill="#fff" stroke="#a3a3a3" stroke-width="1"/><path d="M2.3 4.5 H6.7" stroke="#6a6a60" stroke-width="1"/><path d="M4.5 2.3 V6.7" stroke="#6a6a60" stroke-width="1"/></svg>
<div class="a" style="left:298px;top:739px;width:10px;height:4px;background:#78b0cc;border:1px solid #2d5882;"></div>
<div class="t " style="left:321px;top:733px;font-size:13px;line-height:20px;color:#262626;">Электроцех - Основное производство</div>
<div class="a" style="left:584px;top:942px;width:97px;height:22px;border:1px solid #a3a3a3;background:#fff;"></div>
<div class="a" style="left:608px;top:942px;width:1px;height:22px;background:#a3a3a3;"></div>
<div class="a" style="left:632px;top:942px;width:1px;height:22px;background:#a3a3a3;"></div>
<div class="a" style="left:656px;top:942px;width:1px;height:22px;background:#a3a3a3;"></div>
<svg class="a" style="left:590px;top:948px;" width="12" height="10" viewBox="0 0 12 10"><path d="M1 1.3 H10" stroke="#b3b3b3" stroke-width="1"/><path d="M1 8 L5.5 3 L10 8Z" fill="#b3b3b3"/></svg>
<svg class="a" style="left:614px;top:948px;" width="12" height="10" viewBox="0 0 12 10"><path d="M1 8 L5.5 3.5 L10 8Z" fill="#b3b3b3"/></svg>
<svg class="a" style="left:638px;top:948px;" width="12" height="10" viewBox="0 0 12 10"><path d="M1 3 L10 3 L5.5 7.8Z" fill="#b3b3b3"/></svg>
<svg class="a" style="left:662px;top:948px;" width="12" height="10" viewBox="0 0 12 10"><path d="M1 2.5 L10 2.5 L5.5 7Z" fill="#b3b3b3"/><path d="M1 8.7 H10" stroke="#b3b3b3" stroke-width="1"/></svg>
<div class="a" style="left:692px;top:144px;width:15px;height:15px;border:1px solid #a5a5a5;border-radius:2px;background:#fff;"></div>
<svg class="a" style="left:694px;top:142px;" width="15" height="15" viewBox="0 0 15 15"><path d="M1.6 8.3 L5.2 12.2 L13.5 1.8" fill="none" stroke="#3fa142" stroke-width="2.4" stroke-linejoin="round"/></svg>
<div class="t " style="left:713px;top:142px;font-size:13px;line-height:20px;color:#333333;">Показывать ликвидированные РМ</div>
<div class="a" style="left:692px;top:176px;width:15px;height:15px;border:1px solid #a5a5a5;border-radius:2px;background:#fff;"></div>
<svg class="a" style="left:694px;top:174px;" width="15" height="15" viewBox="0 0 15 15"><path d="M1.6 8.3 L5.2 12.2 L13.5 1.8" fill="none" stroke="#3fa142" stroke-width="2.4" stroke-linejoin="round"/></svg>
<div class="t " style="left:713px;top:173px;font-size:13px;line-height:20px;color:#333333;">Показывать РМ подчиненных подразделений</div>
<div class="a" style="left:998px;top:144px;width:15px;height:15px;border:1px solid #a5a5a5;border-radius:2px;background:#fff;"></div>
<svg class="a" style="left:1000px;top:142px;" width="15" height="15" viewBox="0 0 15 15"><path d="M1.6 8.3 L5.2 12.2 L13.5 1.8" fill="none" stroke="#3fa142" stroke-width="2.4" stroke-linejoin="round"/></svg>
<div class="t " style="left:1019px;top:142px;font-size:13px;line-height:20px;color:#333333;">Показывать дистанционные РМ</div>
<div class="a" style="left:998px;top:179px;width:15px;height:15px;border:1px solid #a5a5a5;border-radius:2px;background:#fff;"></div>
<svg class="a" style="left:1000px;top:177px;" width="15" height="15" viewBox="0 0 15 15"><path d="M1.6 8.3 L5.2 12.2 L13.5 1.8" fill="none" stroke="#3fa142" stroke-width="2.4" stroke-linejoin="round"/></svg>
<div class="t " style="left:1019px;top:177px;font-size:13px;line-height:20px;color:#333333;">Показывать выведенные РМ</div>
<div class="a" style="left:691px;top:204px;width:1210px;height:658px;border:1px solid #a3a3a3;background:#fff;"></div>
<div class="a" style="left:693px;top:206px;width:1206px;height:28px;background:#f2f2f2;"></div>
<div class="a" style="left:692px;top:235px;width:1208px;height:1px;background:#c6c6c6;"></div>
<div class="a" style="left:723px;top:205px;width:3px;height:30px;background:#fff;"></div>
<div class="a" style="left:724px;top:205px;width:1px;height:30px;background:#cfcfcf;"></div>
<div class="a" style="left:870px;top:205px;width:3px;height:30px;background:#fff;"></div>
<div class="a" style="left:871px;top:205px;width:1px;height:30px;background:#cfcfcf;"></div>
<div class="a" style="left:1128px;top:205px;width:3px;height:30px;background:#fff;"></div>
<div class="a" style="left:1129px;top:205px;width:1px;height:30px;background:#cfcfcf;"></div>
<div class="a" style="left:1295px;top:205px;width:3px;height:30px;background:#fff;"></div>
<div class="a" style="left:1296px;top:205px;width:1px;height:30px;background:#cfcfcf;"></div>
<div class="a" style="left:1485px;top:205px;width:3px;height:30px;background:#fff;"></div>
<div class="a" style="left:1486px;top:205px;width:1px;height:30px;background:#cfcfcf;"></div>
<div class="a" style="left:1617px;top:205px;width:3px;height:30px;background:#fff;"></div>
<div class="a" style="left:1618px;top:205px;width:1px;height:30px;background:#cfcfcf;"></div>
<div class="a" style="left:1769px;top:205px;width:3px;height:30px;background:#fff;"></div>
<div class="a" style="left:1770px;top:205px;width:1px;height:30px;background:#cfcfcf;"></div>
<svg class="a" style="left:692px;top:205px;" width="32" height="30" viewBox="0 0 32 30"><path d="M17.7 7.3 L10.6 14.4 Q9.3 15.8 10.2 17.6 Q11.6 19.9 13.8 18.8 L21 12.5 Q22.5 11 21.4 9.8 Q20.1 8.6 18.8 9.7 L13 15.8" fill="none" stroke="#6b6b5e" stroke-width="1.3" stroke-linecap="round"/></svg>
<div class="t " style="left:733px;top:210px;font-size:13px;line-height:20px;color:#333333;">Адрес рабочего ме...</div>
<div class="t " style="left:880px;top:210px;font-size:13px;line-height:20px;color:#333333;">Рабочее место</div>
<div class="t " style="left:1138px;top:210px;font-size:13px;line-height:20px;color:#333333;">Дата спецоценки</div>
<div class="t " style="left:1305px;top:210px;font-size:13px;line-height:20px;color:#333333;">Подразделение</div>
<div class="t " style="left:1495px;top:210px;font-size:13px;line-height:20px;color:#333333;">Дистанционное РМ</div>
<div class="t " style="left:1627px;top:210px;font-size:13px;line-height:20px;color:#333333;">Статус РМ</div>
<div class="t " style="left:1779px;top:210px;font-size:13px;line-height:20px;color:#333333;">Дата статуса</div>
<div class="a" style="left:692px;top:236px;width:1208px;height:625px;overflow:hidden;">
<div class="a" style="left:0px;top:1px;width:32px;height:26px;background:#fde38e;"></div>
<div class="a" style="left:33px;top:1px;width:1175px;height:26px;background:#fdf1c6;"></div>
<div class="a" style="left:32px;top:1px;width:1px;height:26px;background:#fff;"></div>
<div class="a" style="left:179px;top:1px;width:1px;height:26px;background:#fff;"></div>
<div class="a" style="left:437px;top:1px;width:1px;height:26px;background:#fff;"></div>
<div class="a" style="left:604px;top:1px;width:1px;height:26px;background:#fff;"></div>
<div class="a" style="left:794px;top:1px;width:1px;height:26px;background:#fff;"></div>
<div class="a" style="left:926px;top:1px;width:1px;height:26px;background:#fff;"></div>
<div class="a" style="left:1078px;top:1px;width:1px;height:26px;background:#fff;"></div>
<div class="a" style="left:0px;top:28px;width:1208px;height:1px;background:#e3e3e3;"></div>
<div class="a" style="left:32px;top:28px;width:1px;height:1px;background:#f6f6f6;"></div>
<div class="a" style="left:179px;top:28px;width:1px;height:1px;background:#f6f6f6;"></div>
<div class="a" style="left:437px;top:28px;width:1px;height:1px;background:#f6f6f6;"></div>
<div class="a" style="left:604px;top:28px;width:1px;height:1px;background:#f6f6f6;"></div>
<div class="a" style="left:794px;top:28px;width:1px;height:1px;background:#f6f6f6;"></div>
<div class="a" style="left:926px;top:28px;width:1px;height:1px;background:#f6f6f6;"></div>
<div class="a" style="left:1078px;top:28px;width:1px;height:1px;background:#f6f6f6;"></div>
<div class="a" style="left:44px;top:11px;width:10px;height:4px;background:#78b0cc;border:1px solid #2d5882;"></div>
<div class="t " style="left:65px;top:5px;font-size:13px;line-height:20px;color:#262626;">Здание Админ...</div>
<div class="t " style="left:188px;top:5px;font-size:13px;line-height:20px;color:#262626;">1 Генеральный директор</div>
<div class="t " style="left:446px;top:5px;font-size:13px;line-height:20px;color:#262626;">02.08.2019</div>
<div class="t " style="left:613px;top:5px;font-size:13px;line-height:20px;color:#262626;">Администрация</div>
<div class="t " style="left:935px;top:5px;font-size:13px;line-height:20px;color:#262626;">Введено</div>
<div class="t " style="left:1087px;top:5px;font-size:13px;line-height:20px;color:#262626;">14.01.2019</div>
<div class="a" style="left:0px;top:57px;width:1208px;height:1px;background:#e3e3e3;"></div>
<div class="a" style="left:32px;top:57px;width:1px;height:1px;background:#f6f6f6;"></div>
<div class="a" style="left:179px;top:57px;width:1px;height:1px;background:#f6f6f6;"></div>
<div class="a" style="left:437px;top:57px;width:1px;height:1px;background:#f6f6f6;"></div>
<div class="a" style="left:604px;top:57px;width:1px;height:1px;background:#f6f6f6;"></div>
<div class="a" style="left:794px;top:57px;width:1px;height:1px;background:#f6f6f6;"></div>
<div class="a" style="left:926px;top:57px;width:1px;height:1px;background:#f6f6f6;"></div>
<div class="a" style="left:1078px;top:57px;width:1px;height:1px;background:#f6f6f6;"></div>
<div class="a" style="left:44px;top:40px;width:10px;height:4px;background:#78b0cc;border:1px solid #2d5882;"></div>
<div class="t " style="left:188px;top:34px;font-size:13px;line-height:20px;color:#262626;">10 Начальник цеха</div>
<div class="t " style="left:446px;top:34px;font-size:13px;line-height:20px;color:#262626;">02.08.2019</div>
<div class="t " style="left:613px;top:34px;font-size:13px;line-height:20px;color:#262626;">Транспортный цех</div>
<div class="t " style="left:935px;top:34px;font-size:13px;line-height:20px;color:#262626;">Введено</div>
<div class="t " style="left:1087px;top:34px;font-size:13px;line-height:20px;color:#262626;">14.07.2019</div>
<div class="a" style="left:0px;top:59px;width:1208px;height:26px;background:#f8f8f8;"></div>
<div class="a" style="left:0px;top:86px;width:1208px;height:1px;background:#e3e3e3;"></div>
<div class="a" style="left:32px;top:86px;width:1px;height:1px;background:#f6f6f6;"></div>
<div class="a" style="left:179px;top:86px;width:1px;height:1px;background:#f6f6f6;"></div>
<div class="a" style="left:437px;top:86px;width:1px;height:1px;background:#f6f6f6;"></div>
<div class="a" style="left:604px;top:86px;width:1px;height:1px;background:#f6f6f6;"></div>
<div class="a" style="left:794px;top:86px;width:1px;height:1px;background:#f6f6f6;"></div>
<div class="a" style="left:926px;top:86px;width:1px;height:1px;background:#f6f6f6;"></div>
<div class="a" style="left:1078px;top:86px;width:1px;height:1px;background:#f6f6f6;"></div>
<div class="a" style="left:44px;top:69px;width:10px;height:4px;background:#78b0cc;border:1px solid #2d5882;"></div>
<div class="t " style="left:188px;top:63px;font-size:13px;line-height:20px;color:#262626;">11 Слесарь по ремонту автомобилей</div>
<div class="t " style="left:446px;top:63px;font-size:13px;line-height:20px;color:#262626;">02.08.2019</div>
<div class="t " style="left:613px;top:63px;font-size:13px;line-height:20px;color:#262626;">Транспортный цех - Механ...</div>
<div class="t " style="left:935px;top:63px;font-size:13px;line-height:20px;color:#262626;">Введено</div>
<div class="t " style="left:1087px;top:63px;font-size:13px;line-height:20px;color:#262626;">14.01.2019</div>
<div class="a" style="left:0px;top:115px;width:1208px;height:1px;background:#e3e3e3;"></div>
<div class="a" style="left:32px;top:115px;width:1px;height:1px;background:#f6f6f6;"></div>
<div class="a" style="left:179px;top:115px;width:1px;height:1px;background:#f6f6f6;"></div>
<div class="a" style="left:437px;top:115px;width:1px;height:1px;background:#f6f6f6;"></div>
<div class="a" style="left:604px;top:115px;width:1px;height:1px;background:#f6f6f6;"></div>
<div class="a" style="left:794px;top:115px;width:1px;height:1px;background:#f6f6f6;"></div>
<div class="a" style="left:926px;top:115px;width:1px;height:1px;background:#f6f6f6;"></div>
<div class="a" style="left:1078px;top:115px;width:1px;height:1px;background:#f6f6f6;"></div>
<div class="a" style="left:44px;top:98px;width:10px;height:4px;background:#78b0cc;border:1px solid #2d5882;"></div>
<div class="t " style="left:188px;top:92px;font-size:13px;line-height:20px;color:#262626;">120 Уборщик Кладовщик</div>
<div class="t " style="left:446px;top:92px;font-size:13px;line-height:20px;color:#262626;">01.07.2024</div>
<div class="t " style="left:613px;top:92px;font-size:13px;line-height:20px;color:#262626;">Транспортный цех - Механ...</div>
<div class="t " style="left:935px;top:92px;font-size:13px;line-height:20px;color:#262626;">Введено</div>
<div class="t " style="left:1087px;top:92px;font-size:13px;line-height:20px;color:#262626;">23.03.2020</div>
<div class="a" style="left:0px;top:117px;width:1208px;height:26px;background:#f8f8f8;"></div>
<div class="a" style="left:0px;top:144px;width:1208px;height:1px;background:#e3e3e3;"></div>
<div class="a" style="left:32px;top:144px;width:1px;height:1px;background:#f6f6f6;"></div>
<div class="a" style="left:179px;top:144px;width:1px;height:1px;background:#f6f6f6;"></div>
<div class="a" style="left:437px;top:144px;width:1px;height:1px;background:#f6f6f6;"></div>
<div class="a" style="left:604px;top:144px;width:1px;height:1px;background:#f6f6f6;"></div>
<div class="a" style="left:794px;top:144px;width:1px;height:1px;background:#f6f6f6;"></div>
<div class="a" style="left:926px;top:144px;width:1px;height:1px;background:#f6f6f6;"></div>
<div class="a" style="left:1078px;top:144px;width:1px;height:1px;background:#f6f6f6;"></div>
<div class="a" style="left:44px;top:127px;width:10px;height:4px;background:#78b0cc;border:1px solid #2d5882;"></div>
<div class="t " style="left:188px;top:121px;font-size:13px;line-height:20px;color:#262626;">12А Слесарь по ремонту автомобилей</div>
<div class="t " style="left:446px;top:121px;font-size:13px;line-height:20px;color:#262626;">02.08.2019</div>
<div class="t " style="left:613px;top:121px;font-size:13px;line-height:20px;color:#262626;">Транспортный цех - Механ...</div>
<div class="t " style="left:935px;top:121px;font-size:13px;line-height:20px;color:#262626;">Введено</div>
<div class="t " style="left:1087px;top:121px;font-size:13px;line-height:20px;color:#262626;">14.01.2019</div>
<div class="a" style="left:0px;top:173px;width:1208px;height:1px;background:#e3e3e3;"></div>
<div class="a" style="left:32px;top:173px;width:1px;height:1px;background:#f6f6f6;"></div>
<div class="a" style="left:179px;top:173px;width:1px;height:1px;background:#f6f6f6;"></div>
<div class="a" style="left:437px;top:173px;width:1px;height:1px;background:#f6f6f6;"></div>
<div class="a" style="left:604px;top:173px;width:1px;height:1px;background:#f6f6f6;"></div>
<div class="a" style="left:794px;top:173px;width:1px;height:1px;background:#f6f6f6;"></div>
<div class="a" style="left:926px;top:173px;width:1px;height:1px;background:#f6f6f6;"></div>
<div class="a" style="left:1078px;top:173px;width:1px;height:1px;background:#f6f6f6;"></div>
<div class="a" style="left:44px;top:156px;width:10px;height:4px;background:#78b0cc;border:1px solid #2d5882;"></div>
<div class="t " style="left:188px;top:150px;font-size:13px;line-height:20px;color:#262626;">13 Слесарь по топливной аппаратуре</div>
<div class="t " style="left:446px;top:150px;font-size:13px;line-height:20px;color:#262626;">02.08.2019</div>
<div class="t " style="left:613px;top:150px;font-size:13px;line-height:20px;color:#262626;">Транспортный цех - Механ...</div>
<div class="t " style="left:935px;top:150px;font-size:13px;line-height:20px;color:#262626;">Введено</div>
<div class="t " style="left:1087px;top:150px;font-size:13px;line-height:20px;color:#262626;">14.01.2019</div>
<div class="a" style="left:0px;top:175px;width:1208px;height:26px;background:#f8f8f8;"></div>
<div class="a" style="left:0px;top:202px;width:1208px;height:1px;background:#e3e3e3;"></div>
<div class="a" style="left:32px;top:202px;width:1px;height:1px;background:#f6f6f6;"></div>
<div class="a" style="left:179px;top:202px;width:1px;height:1px;background:#f6f6f6;"></div>
<div class="a" style="left:437px;top:202px;width:1px;height:1px;background:#f6f6f6;"></div>
<div class="a" style="left:604px;top:202px;width:1px;height:1px;background:#f6f6f6;"></div>
<div class="a" style="left:794px;top:202px;width:1px;height:1px;background:#f6f6f6;"></div>
<div class="a" style="left:926px;top:202px;width:1px;height:1px;background:#f6f6f6;"></div>
<div class="a" style="left:1078px;top:202px;width:1px;height:1px;background:#f6f6f6;"></div>
<div class="a" style="left:44px;top:185px;width:10px;height:4px;background:#78b0cc;border:1px solid #2d5882;"></div>
<div class="t " style="left:188px;top:179px;font-size:13px;line-height:20px;color:#262626;">142 Машинист Слесарь по ремонту а...</div>
<div class="t " style="left:446px;top:179px;font-size:13px;line-height:20px;color:#262626;">01.07.2024</div>
<div class="t " style="left:613px;top:179px;font-size:13px;line-height:20px;color:#262626;">Транспортный цех - Механ...</div>
<div class="t " style="left:935px;top:179px;font-size:13px;line-height:20px;color:#262626;">Введено</div>
<div class="t " style="left:1087px;top:179px;font-size:13px;line-height:20px;color:#262626;">05.04.2021</div>
<div class="a" style="left:0px;top:231px;width:1208px;height:1px;background:#e3e3e3;"></div>
<div class="a" style="left:32px;top:231px;width:1px;height:1px;background:#f6f6f6;"></div>
<div class="a" style="left:179px;top:231px;width:1px;height:1px;background:#f6f6f6;"></div>
<div class="a" style="left:437px;top:231px;width:1px;height:1px;background:#f6f6f6;"></div>
<div class="a" style="left:604px;top:231px;width:1px;height:1px;background:#f6f6f6;"></div>
<div class="a" style="left:794px;top:231px;width:1px;height:1px;background:#f6f6f6;"></div>
<div class="a" style="left:926px;top:231px;width:1px;height:1px;background:#f6f6f6;"></div>
<div class="a" style="left:1078px;top:231px;width:1px;height:1px;background:#f6f6f6;"></div>
<div class="a" style="left:44px;top:214px;width:10px;height:4px;background:#78b0cc;border:1px solid #2d5882;"></div>
<div class="t " style="left:188px;top:208px;font-size:13px;line-height:20px;color:#262626;">14А Слесарь по топливной аппаратуре</div>
<div class="t " style="left:446px;top:208px;font-size:13px;line-height:20px;color:#262626;">02.08.2019</div>
<div class="t " style="left:613px;top:208px;font-size:13px;line-height:20px;color:#262626;">Транспортный цех - Механ...</div>
<div class="t " style="left:935px;top:208px;font-size:13px;line-height:20px;color:#262626;">Введено</div>
<div class="t " style="left:1087px;top:208px;font-size:13px;line-height:20px;color:#262626;">14.01.2019</div>
<div class="a" style="left:0px;top:233px;width:1208px;height:26px;background:#f8f8f8;"></div>
<div class="a" style="left:0px;top:260px;width:1208px;height:1px;background:#e3e3e3;"></div>
<div class="a" style="left:32px;top:260px;width:1px;height:1px;background:#f6f6f6;"></div>
<div class="a" style="left:179px;top:260px;width:1px;height:1px;background:#f6f6f6;"></div>
<div class="a" style="left:437px;top:260px;width:1px;height:1px;background:#f6f6f6;"></div>
<div class="a" style="left:604px;top:260px;width:1px;height:1px;background:#f6f6f6;"></div>
<div class="a" style="left:794px;top:260px;width:1px;height:1px;background:#f6f6f6;"></div>
<div class="a" style="left:926px;top:260px;width:1px;height:1px;background:#f6f6f6;"></div>
<div class="a" style="left:1078px;top:260px;width:1px;height:1px;background:#f6f6f6;"></div>
<div class="a" style="left:44px;top:243px;width:10px;height:4px;background:#78b0cc;border:1px solid #2d5882;"></div>
<div class="t " style="left:188px;top:237px;font-size:13px;line-height:20px;color:#262626;">15 Аккумуляторщик</div>
<div class="t " style="left:446px;top:237px;font-size:13px;line-height:20px;color:#262626;">02.08.2019</div>
<div class="t " style="left:613px;top:237px;font-size:13px;line-height:20px;color:#262626;">Транспортный цех - Механ...</div>
<div class="t " style="left:935px;top:237px;font-size:13px;line-height:20px;color:#262626;">Введено</div>
<div class="t " style="left:1087px;top:237px;font-size:13px;line-height:20px;color:#262626;">14.01.2019</div>
<div class="a" style="left:0px;top:289px;width:1208px;height:1px;background:#e3e3e3;"></div>
<div class="a" style="left:32px;top:289px;width:1px;height:1px;background:#f6f6f6;"></div>
<div class="a" style="left:179px;top:289px;width:1px;height:1px;background:#f6f6f6;"></div>
<div class="a" style="left:437px;top:289px;width:1px;height:1px;background:#f6f6f6;"></div>
<div class="a" style="left:604px;top:289px;width:1px;height:1px;background:#f6f6f6;"></div>
<div class="a" style="left:794px;top:289px;width:1px;height:1px;background:#f6f6f6;"></div>
<div class="a" style="left:926px;top:289px;width:1px;height:1px;background:#f6f6f6;"></div>
<div class="a" style="left:1078px;top:289px;width:1px;height:1px;background:#f6f6f6;"></div>
<div class="a" style="left:44px;top:272px;width:10px;height:4px;background:#78b0cc;border:1px solid #2d5882;"></div>
<div class="t " style="left:188px;top:266px;font-size:13px;line-height:20px;color:#262626;">162 Водитель Водитель автомобиля г...</div>
<div class="t " style="left:446px;top:266px;font-size:13px;line-height:20px;color:#262626;">01.07.2024</div>
<div class="t " style="left:613px;top:266px;font-size:13px;line-height:20px;color:#262626;">Транспортный цех - Механ...</div>
<div class="t " style="left:935px;top:266px;font-size:13px;line-height:20px;color:#262626;">Введено</div>
<div class="t " style="left:1087px;top:266px;font-size:13px;line-height:20px;color:#262626;">19.04.2021</div>
<div class="a" style="left:0px;top:291px;width:1208px;height:26px;background:#f8f8f8;"></div>
<div class="a" style="left:0px;top:318px;width:1208px;height:1px;background:#e3e3e3;"></div>
<div class="a" style="left:32px;top:318px;width:1px;height:1px;background:#f6f6f6;"></div>
<div class="a" style="left:179px;top:318px;width:1px;height:1px;background:#f6f6f6;"></div>
<div class="a" style="left:437px;top:318px;width:1px;height:1px;background:#f6f6f6;"></div>
<div class="a" style="left:604px;top:318px;width:1px;height:1px;background:#f6f6f6;"></div>
<div class="a" style="left:794px;top:318px;width:1px;height:1px;background:#f6f6f6;"></div>
<div class="a" style="left:926px;top:318px;width:1px;height:1px;background:#f6f6f6;"></div>
<div class="a" style="left:1078px;top:318px;width:1px;height:1px;background:#f6f6f6;"></div>
<div class="a" style="left:44px;top:301px;width:10px;height:4px;background:#78b0cc;border:1px solid #2d5882;"></div>
<div class="t " style="left:188px;top:295px;font-size:13px;line-height:20px;color:#262626;">16А Аккумуляторщик</div>
<div class="t " style="left:446px;top:295px;font-size:13px;line-height:20px;color:#262626;">02.08.2019</div>
<div class="t " style="left:613px;top:295px;font-size:13px;line-height:20px;color:#262626;">Транспортный цех - Механ...</div>
<div class="t " style="left:935px;top:295px;font-size:13px;line-height:20px;color:#262626;">Введено</div>
<div class="t " style="left:1087px;top:295px;font-size:13px;line-height:20px;color:#262626;">14.01.2019</div>
<div class="a" style="left:0px;top:347px;width:1208px;height:1px;background:#e3e3e3;"></div>
<div class="a" style="left:32px;top:347px;width:1px;height:1px;background:#f6f6f6;"></div>
<div class="a" style="left:179px;top:347px;width:1px;height:1px;background:#f6f6f6;"></div>
<div class="a" style="left:437px;top:347px;width:1px;height:1px;background:#f6f6f6;"></div>
<div class="a" style="left:604px;top:347px;width:1px;height:1px;background:#f6f6f6;"></div>
<div class="a" style="left:794px;top:347px;width:1px;height:1px;background:#f6f6f6;"></div>
<div class="a" style="left:926px;top:347px;width:1px;height:1px;background:#f6f6f6;"></div>
<div class="a" style="left:1078px;top:347px;width:1px;height:1px;background:#f6f6f6;"></div>
<div class="a" style="left:44px;top:330px;width:10px;height:4px;background:#78b0cc;border:1px solid #2d5882;"></div>
<div class="t " style="left:188px;top:324px;font-size:13px;line-height:20px;color:#262626;">17 Электрогазосварщик</div>
<div class="t " style="left:446px;top:324px;font-size:13px;line-height:20px;color:#262626;">02.08.2019</div>
<div class="t " style="left:613px;top:324px;font-size:13px;line-height:20px;color:#262626;">Транспортный цех - Механ...</div>
<div class="t " style="left:935px;top:324px;font-size:13px;line-height:20px;color:#262626;">Введено</div>
<div class="t " style="left:1087px;top:324px;font-size:13px;line-height:20px;color:#262626;">14.01.2019</div>
<div class="a" style="left:0px;top:349px;width:1208px;height:26px;background:#f8f8f8;"></div>
<div class="a" style="left:0px;top:376px;width:1208px;height:1px;background:#e3e3e3;"></div>
<div class="a" style="left:32px;top:376px;width:1px;height:1px;background:#f6f6f6;"></div>
<div class="a" style="left:179px;top:376px;width:1px;height:1px;background:#f6f6f6;"></div>
<div class="a" style="left:437px;top:376px;width:1px;height:1px;background:#f6f6f6;"></div>
<div class="a" style="left:604px;top:376px;width:1px;height:1px;background:#f6f6f6;"></div>
<div class="a" style="left:794px;top:376px;width:1px;height:1px;background:#f6f6f6;"></div>
<div class="a" style="left:926px;top:376px;width:1px;height:1px;background:#f6f6f6;"></div>
<div class="a" style="left:1078px;top:376px;width:1px;height:1px;background:#f6f6f6;"></div>
<div class="a" style="left:44px;top:359px;width:10px;height:4px;background:#78b0cc;border:1px solid #2d5882;"></div>
<div class="t " style="left:188px;top:353px;font-size:13px;line-height:20px;color:#262626;">18А Электрогазосварщик</div>
<div class="t " style="left:446px;top:353px;font-size:13px;line-height:20px;color:#262626;">02.08.2019</div>
<div class="t " style="left:613px;top:353px;font-size:13px;line-height:20px;color:#262626;">Транспортный цех - Механ...</div>
<div class="t " style="left:935px;top:353px;font-size:13px;line-height:20px;color:#262626;">Введено</div>
<div class="t " style="left:1087px;top:353px;font-size:13px;line-height:20px;color:#262626;">14.01.2019</div>
<div class="a" style="left:0px;top:405px;width:1208px;height:1px;background:#e3e3e3;"></div>
<div class="a" style="left:32px;top:405px;width:1px;height:1px;background:#f6f6f6;"></div>
<div class="a" style="left:179px;top:405px;width:1px;height:1px;background:#f6f6f6;"></div>
<div class="a" style="left:437px;top:405px;width:1px;height:1px;background:#f6f6f6;"></div>
<div class="a" style="left:604px;top:405px;width:1px;height:1px;background:#f6f6f6;"></div>
<div class="a" style="left:794px;top:405px;width:1px;height:1px;background:#f6f6f6;"></div>
<div class="a" style="left:926px;top:405px;width:1px;height:1px;background:#f6f6f6;"></div>
<div class="a" style="left:1078px;top:405px;width:1px;height:1px;background:#f6f6f6;"></div>
<div class="a" style="left:44px;top:388px;width:10px;height:4px;background:#78b0cc;border:1px solid #2d5882;"></div>
<div class="t " style="left:188px;top:382px;font-size:13px;line-height:20px;color:#262626;">19 Кладовщик</div>
<div class="t " style="left:446px;top:382px;font-size:13px;line-height:20px;color:#262626;">02.08.2019</div>
<div class="t " style="left:613px;top:382px;font-size:13px;line-height:20px;color:#262626;">Транспортный цех - Механ...</div>
<div class="t " style="left:935px;top:382px;font-size:13px;line-height:20px;color:#262626;">Введено</div>
<div class="t " style="left:1087px;top:382px;font-size:13px;line-height:20px;color:#262626;">14.01.2019</div>
<div class="a" style="left:0px;top:407px;width:1208px;height:26px;background:#f8f8f8;"></div>
<div class="a" style="left:0px;top:434px;width:1208px;height:1px;background:#e3e3e3;"></div>
<div class="a" style="left:32px;top:434px;width:1px;height:1px;background:#f6f6f6;"></div>
<div class="a" style="left:179px;top:434px;width:1px;height:1px;background:#f6f6f6;"></div>
<div class="a" style="left:437px;top:434px;width:1px;height:1px;background:#f6f6f6;"></div>
<div class="a" style="left:604px;top:434px;width:1px;height:1px;background:#f6f6f6;"></div>
<div class="a" style="left:794px;top:434px;width:1px;height:1px;background:#f6f6f6;"></div>
<div class="a" style="left:926px;top:434px;width:1px;height:1px;background:#f6f6f6;"></div>
<div class="a" style="left:1078px;top:434px;width:1px;height:1px;background:#f6f6f6;"></div>
<div class="a" style="left:44px;top:417px;width:10px;height:4px;background:#78b0cc;border:1px solid #2d5882;"></div>
<div class="t " style="left:188px;top:411px;font-size:13px;line-height:20px;color:#262626;">2 Главный бухгалтер</div>
<div class="t " style="left:446px;top:411px;font-size:13px;line-height:20px;color:#262626;">02.08.2019</div>
<div class="t " style="left:613px;top:411px;font-size:13px;line-height:20px;color:#262626;">Администрация</div>
<div class="t " style="left:935px;top:411px;font-size:13px;line-height:20px;color:#262626;">Введено</div>
<div class="t " style="left:1087px;top:411px;font-size:13px;line-height:20px;color:#262626;">14.01.2019</div>
<div class="a" style="left:0px;top:463px;width:1208px;height:1px;background:#e3e3e3;"></div>
<div class="a" style="left:32px;top:463px;width:1px;height:1px;background:#f6f6f6;"></div>
<div class="a" style="left:179px;top:463px;width:1px;height:1px;background:#f6f6f6;"></div>
<div class="a" style="left:437px;top:463px;width:1px;height:1px;background:#f6f6f6;"></div>
<div class="a" style="left:604px;top:463px;width:1px;height:1px;background:#f6f6f6;"></div>
<div class="a" style="left:794px;top:463px;width:1px;height:1px;background:#f6f6f6;"></div>
<div class="a" style="left:926px;top:463px;width:1px;height:1px;background:#f6f6f6;"></div>
<div class="a" style="left:1078px;top:463px;width:1px;height:1px;background:#f6f6f6;"></div>
<div class="a" style="left:44px;top:446px;width:10px;height:4px;background:#78b0cc;border:1px solid #2d5882;"></div>
<div class="t " style="left:188px;top:440px;font-size:13px;line-height:20px;color:#262626;">20 Водитель автомобиля грузоподъё...</div>
<div class="t " style="left:446px;top:440px;font-size:13px;line-height:20px;color:#262626;">02.08.2019</div>
<div class="t " style="left:613px;top:440px;font-size:13px;line-height:20px;color:#262626;">Транспортный цех - Основ...</div>
<div class="t " style="left:935px;top:440px;font-size:13px;line-height:20px;color:#262626;">Введено</div>
<div class="t " style="left:1087px;top:440px;font-size:13px;line-height:20px;color:#262626;">14.01.2019</div>
<div class="a" style="left:0px;top:465px;width:1208px;height:26px;background:#f8f8f8;"></div>
<div class="a" style="left:0px;top:492px;width:1208px;height:1px;background:#e3e3e3;"></div>
<div class="a" style="left:32px;top:492px;width:1px;height:1px;background:#f6f6f6;"></div>
<div class="a" style="left:179px;top:492px;width:1px;height:1px;background:#f6f6f6;"></div>
<div class="a" style="left:437px;top:492px;width:1px;height:1px;background:#f6f6f6;"></div>
<div class="a" style="left:604px;top:492px;width:1px;height:1px;background:#f6f6f6;"></div>
<div class="a" style="left:794px;top:492px;width:1px;height:1px;background:#f6f6f6;"></div>
<div class="a" style="left:926px;top:492px;width:1px;height:1px;background:#f6f6f6;"></div>
<div class="a" style="left:1078px;top:492px;width:1px;height:1px;background:#f6f6f6;"></div>
<div class="a" style="left:44px;top:475px;width:10px;height:4px;background:#78b0cc;border:1px solid #2d5882;"></div>
<div class="t " style="left:188px;top:469px;font-size:13px;line-height:20px;color:#262626;">21 Водитель автомобиля грузоподъё...</div>
<div class="t " style="left:446px;top:469px;font-size:13px;line-height:20px;color:#262626;">02.08.2019</div>
<div class="t " style="left:613px;top:469px;font-size:13px;line-height:20px;color:#262626;">Транспортный цех - Основ...</div>
<div class="t " style="left:935px;top:469px;font-size:13px;line-height:20px;color:#262626;">Введено</div>
<div class="t " style="left:1087px;top:469px;font-size:13px;line-height:20px;color:#262626;">14.01.2019</div>
<div class="a" style="left:0px;top:521px;width:1208px;height:1px;background:#e3e3e3;"></div>
<div class="a" style="left:32px;top:521px;width:1px;height:1px;background:#f6f6f6;"></div>
<div class="a" style="left:179px;top:521px;width:1px;height:1px;background:#f6f6f6;"></div>
<div class="a" style="left:437px;top:521px;width:1px;height:1px;background:#f6f6f6;"></div>
<div class="a" style="left:604px;top:521px;width:1px;height:1px;background:#f6f6f6;"></div>
<div class="a" style="left:794px;top:521px;width:1px;height:1px;background:#f6f6f6;"></div>
<div class="a" style="left:926px;top:521px;width:1px;height:1px;background:#f6f6f6;"></div>
<div class="a" style="left:1078px;top:521px;width:1px;height:1px;background:#f6f6f6;"></div>
<div class="a" style="left:44px;top:504px;width:10px;height:4px;background:#78b0cc;border:1px solid #2d5882;"></div>
<div class="t " style="left:188px;top:498px;font-size:13px;line-height:20px;color:#262626;">22 Водитель автомобиля грузоподъё...</div>
<div class="t " style="left:446px;top:498px;font-size:13px;line-height:20px;color:#262626;">02.08.2019</div>
<div class="t " style="left:613px;top:498px;font-size:13px;line-height:20px;color:#262626;">Транспортный цех - Основ...</div>
<div class="t " style="left:935px;top:498px;font-size:13px;line-height:20px;color:#262626;">Введено</div>
<div class="t " style="left:1087px;top:498px;font-size:13px;line-height:20px;color:#262626;">14.01.2019</div>
<div class="a" style="left:0px;top:523px;width:1208px;height:26px;background:#f8f8f8;"></div>
<div class="a" style="left:0px;top:550px;width:1208px;height:1px;background:#e3e3e3;"></div>
<div class="a" style="left:32px;top:550px;width:1px;height:1px;background:#f6f6f6;"></div>
<div class="a" style="left:179px;top:550px;width:1px;height:1px;background:#f6f6f6;"></div>
<div class="a" style="left:437px;top:550px;width:1px;height:1px;background:#f6f6f6;"></div>
<div class="a" style="left:604px;top:550px;width:1px;height:1px;background:#f6f6f6;"></div>
<div class="a" style="left:794px;top:550px;width:1px;height:1px;background:#f6f6f6;"></div>
<div class="a" style="left:926px;top:550px;width:1px;height:1px;background:#f6f6f6;"></div>
<div class="a" style="left:1078px;top:550px;width:1px;height:1px;background:#f6f6f6;"></div>
<div class="a" style="left:44px;top:533px;width:10px;height:4px;background:#78b0cc;border:1px solid #2d5882;"></div>
<div class="t " style="left:188px;top:527px;font-size:13px;line-height:20px;color:#262626;">23 Водитель автомобиля грузоподъё...</div>
<div class="t " style="left:446px;top:527px;font-size:13px;line-height:20px;color:#262626;">02.08.2019</div>
<div class="t " style="left:613px;top:527px;font-size:13px;line-height:20px;color:#262626;">Транспортный цех - Основ...</div>
<div class="t " style="left:935px;top:527px;font-size:13px;line-height:20px;color:#262626;">Введено</div>
<div class="t " style="left:1087px;top:527px;font-size:13px;line-height:20px;color:#262626;">14.01.2019</div>
<div class="a" style="left:0px;top:579px;width:1208px;height:1px;background:#e3e3e3;"></div>
<div class="a" style="left:32px;top:579px;width:1px;height:1px;background:#f6f6f6;"></div>
<div class="a" style="left:179px;top:579px;width:1px;height:1px;background:#f6f6f6;"></div>
<div class="a" style="left:437px;top:579px;width:1px;height:1px;background:#f6f6f6;"></div>
<div class="a" style="left:604px;top:579px;width:1px;height:1px;background:#f6f6f6;"></div>
<div class="a" style="left:794px;top:579px;width:1px;height:1px;background:#f6f6f6;"></div>
<div class="a" style="left:926px;top:579px;width:1px;height:1px;background:#f6f6f6;"></div>
<div class="a" style="left:1078px;top:579px;width:1px;height:1px;background:#f6f6f6;"></div>
<div class="a" style="left:44px;top:562px;width:10px;height:4px;background:#78b0cc;border:1px solid #2d5882;"></div>
<div class="t " style="left:188px;top:556px;font-size:13px;line-height:20px;color:#262626;">24 Водитель автомобиля грузоподъё...</div>
<div class="t " style="left:446px;top:556px;font-size:13px;line-height:20px;color:#262626;">02.08.2019</div>
<div class="t " style="left:613px;top:556px;font-size:13px;line-height:20px;color:#262626;">Транспортный цех - Основ...</div>
<div class="t " style="left:935px;top:556px;font-size:13px;line-height:20px;color:#262626;">Введено</div>
<div class="t " style="left:1087px;top:556px;font-size:13px;line-height:20px;color:#262626;">14.01.2019</div>
<div class="a" style="left:0px;top:581px;width:1208px;height:26px;background:#f8f8f8;"></div>
<div class="a" style="left:0px;top:608px;width:1208px;height:1px;background:#e3e3e3;"></div>
<div class="a" style="left:32px;top:608px;width:1px;height:1px;background:#f6f6f6;"></div>
<div class="a" style="left:179px;top:608px;width:1px;height:1px;background:#f6f6f6;"></div>
<div class="a" style="left:437px;top:608px;width:1px;height:1px;background:#f6f6f6;"></div>
<div class="a" style="left:604px;top:608px;width:1px;height:1px;background:#f6f6f6;"></div>
<div class="a" style="left:794px;top:608px;width:1px;height:1px;background:#f6f6f6;"></div>
<div class="a" style="left:926px;top:608px;width:1px;height:1px;background:#f6f6f6;"></div>
<div class="a" style="left:1078px;top:608px;width:1px;height:1px;background:#f6f6f6;"></div>
<div class="a" style="left:44px;top:591px;width:10px;height:4px;background:#78b0cc;border:1px solid #2d5882;"></div>
<div class="t " style="left:188px;top:585px;font-size:13px;line-height:20px;color:#262626;">25 Водитель автомобиля грузоподъё...</div>
<div class="t " style="left:446px;top:585px;font-size:13px;line-height:20px;color:#262626;">02.08.2019</div>
<div class="t " style="left:613px;top:585px;font-size:13px;line-height:20px;color:#262626;">Транспортный цех - Основ...</div>
<div class="t " style="left:935px;top:585px;font-size:13px;line-height:20px;color:#262626;">Введено</div>
<div class="t " style="left:1087px;top:585px;font-size:13px;line-height:20px;color:#262626;">14.01.2019</div>
<div class="a" style="left:0px;top:637px;width:1208px;height:1px;background:#e3e3e3;"></div>
<div class="a" style="left:32px;top:637px;width:1px;height:1px;background:#f6f6f6;"></div>
<div class="a" style="left:179px;top:637px;width:1px;height:1px;background:#f6f6f6;"></div>
<div class="a" style="left:437px;top:637px;width:1px;height:1px;background:#f6f6f6;"></div>
<div class="a" style="left:604px;top:637px;width:1px;height:1px;background:#f6f6f6;"></div>
<div class="a" style="left:794px;top:637px;width:1px;height:1px;background:#f6f6f6;"></div>
<div class="a" style="left:926px;top:637px;width:1px;height:1px;background:#f6f6f6;"></div>
<div class="a" style="left:1078px;top:637px;width:1px;height:1px;background:#f6f6f6;"></div>
<div class="a" style="left:44px;top:620px;width:10px;height:4px;background:#78b0cc;border:1px solid #2d5882;"></div>
<div class="t " style="left:188px;top:614px;font-size:13px;line-height:20px;color:#262626;">26 Начальник цеха</div>
<div class="t " style="left:446px;top:614px;font-size:13px;line-height:20px;color:#262626;">02.08.2019</div>
<div class="t " style="left:613px;top:614px;font-size:13px;line-height:20px;color:#262626;">Цех №1</div>
<div class="t " style="left:935px;top:614px;font-size:13px;line-height:20px;color:#262626;">Введено</div>
<div class="t " style="left:1087px;top:614px;font-size:13px;line-height:20px;color:#262626;">14.01.2019</div>
</div>
<div class="a" style="left:1804px;top:861px;width:97px;height:22px;border:1px solid #a3a3a3;background:#fff;"></div>
<div class="a" style="left:1853px;top:862px;width:47px;height:20px;background:linear-gradient(#fff 40%,#ececec);"></div>
<div class="a" style="left:1828px;top:861px;width:1px;height:22px;background:#a3a3a3;"></div>
<div class="a" style="left:1852px;top:861px;width:1px;height:22px;background:#a3a3a3;"></div>
<div class="a" style="left:1876px;top:861px;width:1px;height:22px;background:#a3a3a3;"></div>
<svg class="a" style="left:1810px;top:867px;" width="12" height="10" viewBox="0 0 12 10"><path d="M1 1.3 H10" stroke="#b3b3b3" stroke-width="1"/><path d="M1 8 L5.5 3 L10 8Z" fill="#b3b3b3"/></svg>
<svg class="a" style="left:1834px;top:867px;" width="12" height="10" viewBox="0 0 12 10"><path d="M1 8 L5.5 3.5 L10 8Z" fill="#b3b3b3"/></svg>
<svg class="a" style="left:1858px;top:867px;" width="12" height="10" viewBox="0 0 12 10"><path d="M1 3 L10 3 L5.5 7.8Z" fill="#2b2b2b"/></svg>
<svg class="a" style="left:1882px;top:867px;" width="12" height="10" viewBox="0 0 12 10"><path d="M1 2.5 L10 2.5 L5.5 7Z" fill="#2b2b2b"/><path d="M1 8.7 H10" stroke="#2b2b2b" stroke-width="1"/></svg>
<div class="a" style="left:691px;top:892px;width:1210px;height:18px;background:#ffb6c1;"></div>
<div class="t " style="left:692px;top:892px;font-size:13px;line-height:20px;color:#333;letter-spacing:0;">*Красным цветом выделены РМ без записи о статусе рабочего места</div>
<div class="a" style="left:691px;top:919px;width:1210px;height:18px;background:#e0ffff;"></div>
<div class="t " style="left:692px;top:919px;font-size:13px;line-height:20px;color:#333;letter-spacing:0;">**Светло-голубым цветом выделены дистанционные РМ</div>
<div class="a" style="left:691px;top:946px;width:1210px;height:18px;background:#d9d9d9;"></div>
<div class="t " style="left:692px;top:946px;font-size:13px;line-height:20px;color:#333;letter-spacing:0;">***Серым цветом выделены ликвидированные и выведенные РМ</div>
</body></html>
